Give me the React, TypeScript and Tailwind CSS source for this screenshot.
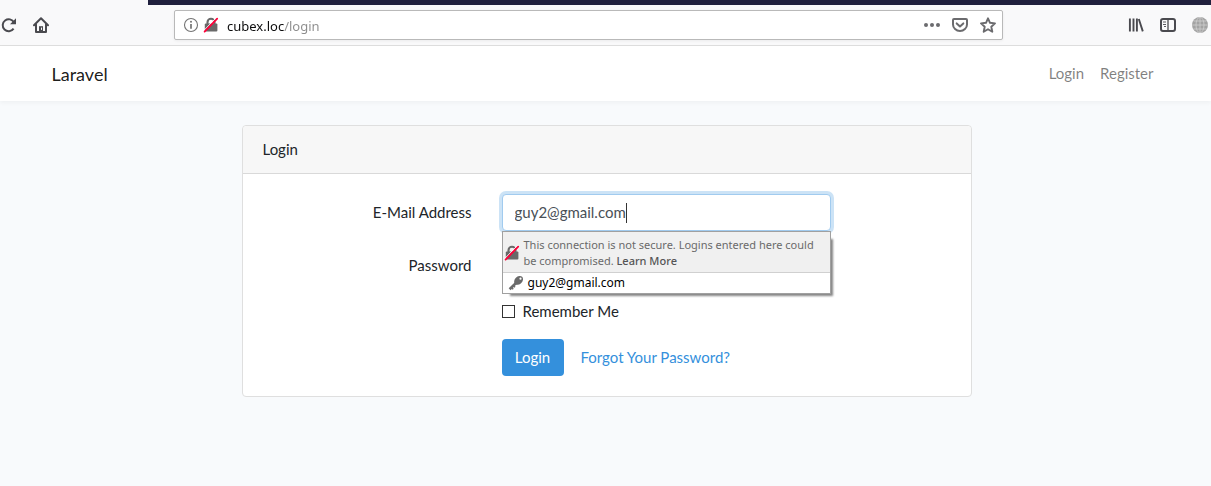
import { useState } from "react";

function InsecureLock() {
  return (
    <svg className="size-4 shrink-0" viewBox="0 0 16 16" aria-hidden="true">
      <path d="M4.500 7.500V5.200a3.500 3.500 0 0 1 7 0v2.300" fill="none" stroke="#696969" strokeWidth="2.100" />
      <rect x="1.800" y="6.600" width="12.600" height="8" rx="1" fill="#696969" />
      <path d="M.8 13.600 13.200.8" stroke="#fff" strokeWidth="1" />
      <path d="M1.600 14.600 14.200 1.600" stroke="#ff0039" strokeWidth="1.800" strokeLinecap="round" />
    </svg>
  );
}

function BrowserToolbar() {
  const [url, setUrl] = useState("cubex.loc/login");
  return (
    <div className="border-b border-[#dedede] bg-[#f9f9fa] font-['Noto_Sans','Open_Sans',sans-serif]">
      <div className="ml-[148px] h-[5px] bg-[#20203d]" />
      <div className="flex items-center py-[5px] pr-[3px] pl-px text-[#4a4a4f]">
        <div className="flex items-center gap-4">
          <button type="button" aria-label="Reload" className="size-4">
            <svg className="size-4" viewBox="0 0 16 16" fill="none" stroke="currentColor" strokeWidth="2">
              <path d="M12.6 11.7A6 6 0 1 1 13 5.4" />
              <path d="M15 1.2v6H9z" fill="currentColor" stroke="none" />
            </svg>
          </button>
          <button type="button" aria-label="Home" className="size-4">
            <svg className="size-4" viewBox="0 0 16 16" fill="none" stroke="currentColor" strokeWidth="2" strokeLinejoin="round" strokeLinecap="round">
              <path d="M1 8.2 8 1.3l7 6.9" />
              <path d="M3 7.5V15h10V7.5" />
              <path d="M6 14.5V9.2h4v5.3z" fill="currentColor" stroke="none" />
              <path d="M8.5 11v1.5" stroke="#f9f9fa" strokeWidth="1" />
            </svg>
          </button>
        </div>
        <div className="mx-[125px] flex h-[30px] min-w-0 flex-1 items-center rounded-xs border border-[#b9b9b9] bg-white px-2 shadow-[0_1px_3px_rgba(0,0,0,0.06)]">
          <svg className="size-4 shrink-0" viewBox="0 0 16 16" aria-hidden="true">
            <circle cx="8" cy="8" r="6.5" fill="none" stroke="#737373" strokeWidth="1.1" />
            <path d="M8 7v4.7" stroke="#737373" strokeWidth="1.7" />
            <circle cx="8" cy="4.7" r="1" fill="#737373" />
          </svg>
          <span className="ml-1 flex">
            <InsecureLock />
          </span>
          <input
            aria-label="Address"
            value={url}
            onChange={(e) => setUrl(e.target.value)}
            className="ml-2 min-w-0 flex-1 bg-[linear-gradient(90deg,#0c0c0d_57px,#8c8c8c_57px)] bg-clip-text pt-0.5 text-[13px] leading-5 text-transparent caret-black outline-none"
          />
          <div className="flex items-center gap-3 text-[#6b6b6e]">
            <button type="button" aria-label="Page actions" className="size-4">
              <svg className="size-4" viewBox="0 0 16 16" fill="currentColor">
                <circle cx="2" cy="8" r="2" />
                <circle cx="8" cy="8" r="2" />
                <circle cx="14" cy="8" r="2" />
              </svg>
            </button>
            <button type="button" aria-label="Save to Pocket" className="size-4">
              <svg className="size-4" viewBox="0 0 16 16" fill="none" stroke="currentColor" strokeWidth="2" strokeLinejoin="round" strokeLinecap="round">
                <path d="M2 2h12a1 1 0 0 1 1 1v4.500a7 6.500 0 0 1-14 0V3a1 1 0 0 1 1-1z" />
                <path d="M4.700 6.400 8 9.400l3.300-3" />
              </svg>
            </button>
            <button type="button" aria-label="Bookmark" className="-mr-0.5 size-4">
              <svg className="size-4" viewBox="0 0 16 16" fill="none" stroke="currentColor" strokeWidth="1.900" strokeLinejoin="round">
                <path d="m8 1.300 2 4.500 5 .6-3.700 3.300 1 5L8 12.200l-4.300 2.500 1-5L1 6.400l5-.6z" />
              </svg>
            </button>
          </div>
        </div>
        <div className="flex items-center gap-4">
          <button type="button" aria-label="Library" className="size-4">
            <svg className="size-4" viewBox="0 0 16 16" fill="none" stroke="currentColor" strokeWidth="1.900">
              <path d="M1.900 1.500v13M5.500 1.500v13M8.900 1.500v13M10.800 2l4 12.400" />
            </svg>
          </button>
          <button type="button" aria-label="Sidebars" className="size-4">
            <svg className="size-4" viewBox="0 0 16 16" fill="none" stroke="currentColor">
              <rect x="1" y="2" width="14" height="12" rx="2" strokeWidth="2" />
              <path d="M8 2v12" strokeWidth="1.300" />
              <path d="M3 5h3M3 7.500h3M4 9.500h2" strokeWidth=".9" />
            </svg>
          </button>
          <button type="button" aria-label="Network" className="size-4">
            <svg className="size-4" viewBox="0 0 16 16" fill="none" stroke="#cfcfcf" strokeWidth=".8">
              <circle cx="8" cy="8" r="8" fill="#a3a3a3" stroke="none" />
              <path d="M0 8h16M1.500 4h13M1.500 12h13M8 0v16" />
              <ellipse cx="8" cy="8" rx="4" ry="7.800" />
            </svg>
          </button>
        </div>
      </div>
    </div>
  );
}

function SavedLoginPopup() {
  return (
    <div className="absolute inset-x-0 top-full z-10 border border-[#a0a0a0] bg-white font-['Noto_Sans','Open_Sans',sans-serif] text-xs leading-4 shadow-[5px_5px_2px_-3px_#858585]">
      <div className="flex items-center gap-1 border-b border-[#d0d0d0] bg-[#f0f0f0] pt-[5px] pr-2 pb-[3px] pl-px text-[#6a6a6a]">
        <InsecureLock />
        <p className="min-w-0 text-[11px] leading-4">
          This connection is not secure. Logins entered here could be compromised.{" "}
          <a href="#learn-more" className="font-medium text-[#555]">
            Learn More
          </a>
        </p>
      </div>
      <button type="button" className="flex h-5 w-full items-center gap-1 pl-[5px] text-left text-black">
        <svg className="size-4" viewBox="0 0 16 16" aria-hidden="true">
          <path d="M1.600 14.300 8 8" stroke="#6a6a6a" strokeWidth="2.600" />
          <path d="m3.200 12.300 2 2M5.200 10.500l1.800 1.800" stroke="#6a6a6a" strokeWidth="1.600" />
          <ellipse cx="10.600" cy="5.400" rx="5" ry="3.800" transform="rotate(-45 10.600 5.400)" fill="#6a6a6a" />
          <circle cx="12.500" cy="3.700" r="1.100" fill="#fff" />
        </svg>
        guy2@gmail.com
      </button>
    </div>
  );
}

export default function App() {
  const [email, setEmail] = useState("guy2@gmail.com");
  const row = "grid grid-cols-[1fr_2fr] gap-x-[30px] sm:grid-cols-[209fr_329fr_90fr]";
  return (
    <div className="min-h-screen bg-[#f8fafc] font-[Lato,sans-serif] text-[15px] leading-[23px] text-[#212529]">
      <BrowserToolbar />
      <nav className="bg-white shadow-[0_2px_4px_rgba(0,0,0,0.04)]">
        <div className="mx-auto flex h-[55px] max-w-[1140px] items-center justify-between px-4">
          <a href="#home" className="text-lg text-black/90">
            Laravel
          </a>
          <div className="flex gap-4 pr-[6px] text-black/50">
            <a href="#login">Login</a>
            <a href="#register">Register</a>
          </div>
        </div>
      </nav>
      <main className="py-6 pr-4 pl-[18px]">
        <section className="mx-auto max-w-[730px] rounded border border-[#dfdfdf] bg-white">
          <h1 className="rounded-t border-b border-[#d9d9d9] bg-[#f7f7f7] px-5 py-3">Login</h1>
          <form className="flex flex-col gap-4 p-5" onSubmit={(e) => e.preventDefault()}>
            <div className={row}>
              <label htmlFor="email" className="py-[7px] text-right">
                E-Mail Address
              </label>
              <div className="relative">
                <input
                  id="email"
                  type="email"
                  value={email}
                  onChange={(e) => setEmail(e.target.value)}
                  className="block h-[37px] w-full rounded border border-[#a1cbef] bg-white px-3 pb-0.5 text-[#495057] shadow-[0_0_0_3px_rgba(52,144,220,0.25)] outline-none"
                />
                <span className="absolute top-[9px] left-[124px] h-5 w-px bg-[#333]" />
                <SavedLoginPopup />
              </div>
            </div>
            <div className={row}>
              <label htmlFor="password" className="py-[7px] text-right">
                Password
              </label>
              <input id="password" type="password" className="block h-[37px] w-full min-w-0 rounded border border-[#ced4da] px-3" />
            </div>
            <div className={row}>
              <label className="col-start-2 flex items-center gap-2">
                <input type="checkbox" className="size-[13px] appearance-none border border-[#333] bg-white checked:bg-[#3490dc]" />
                Remember Me
              </label>
            </div>
            <div className={row}>
              <div className="col-start-2 flex items-center gap-1 whitespace-nowrap">
                <button type="submit" className="h-[37px] min-w-[62px] rounded bg-[#3490dc] px-3 text-white">
                  Login
                </button>
                <a href="#forgot" className="px-[13px] text-[#3490dc]">
                  Forgot Your Password?
                </a>
              </div>
            </div>
          </form>
        </section>
      </main>
    </div>
  );
}
